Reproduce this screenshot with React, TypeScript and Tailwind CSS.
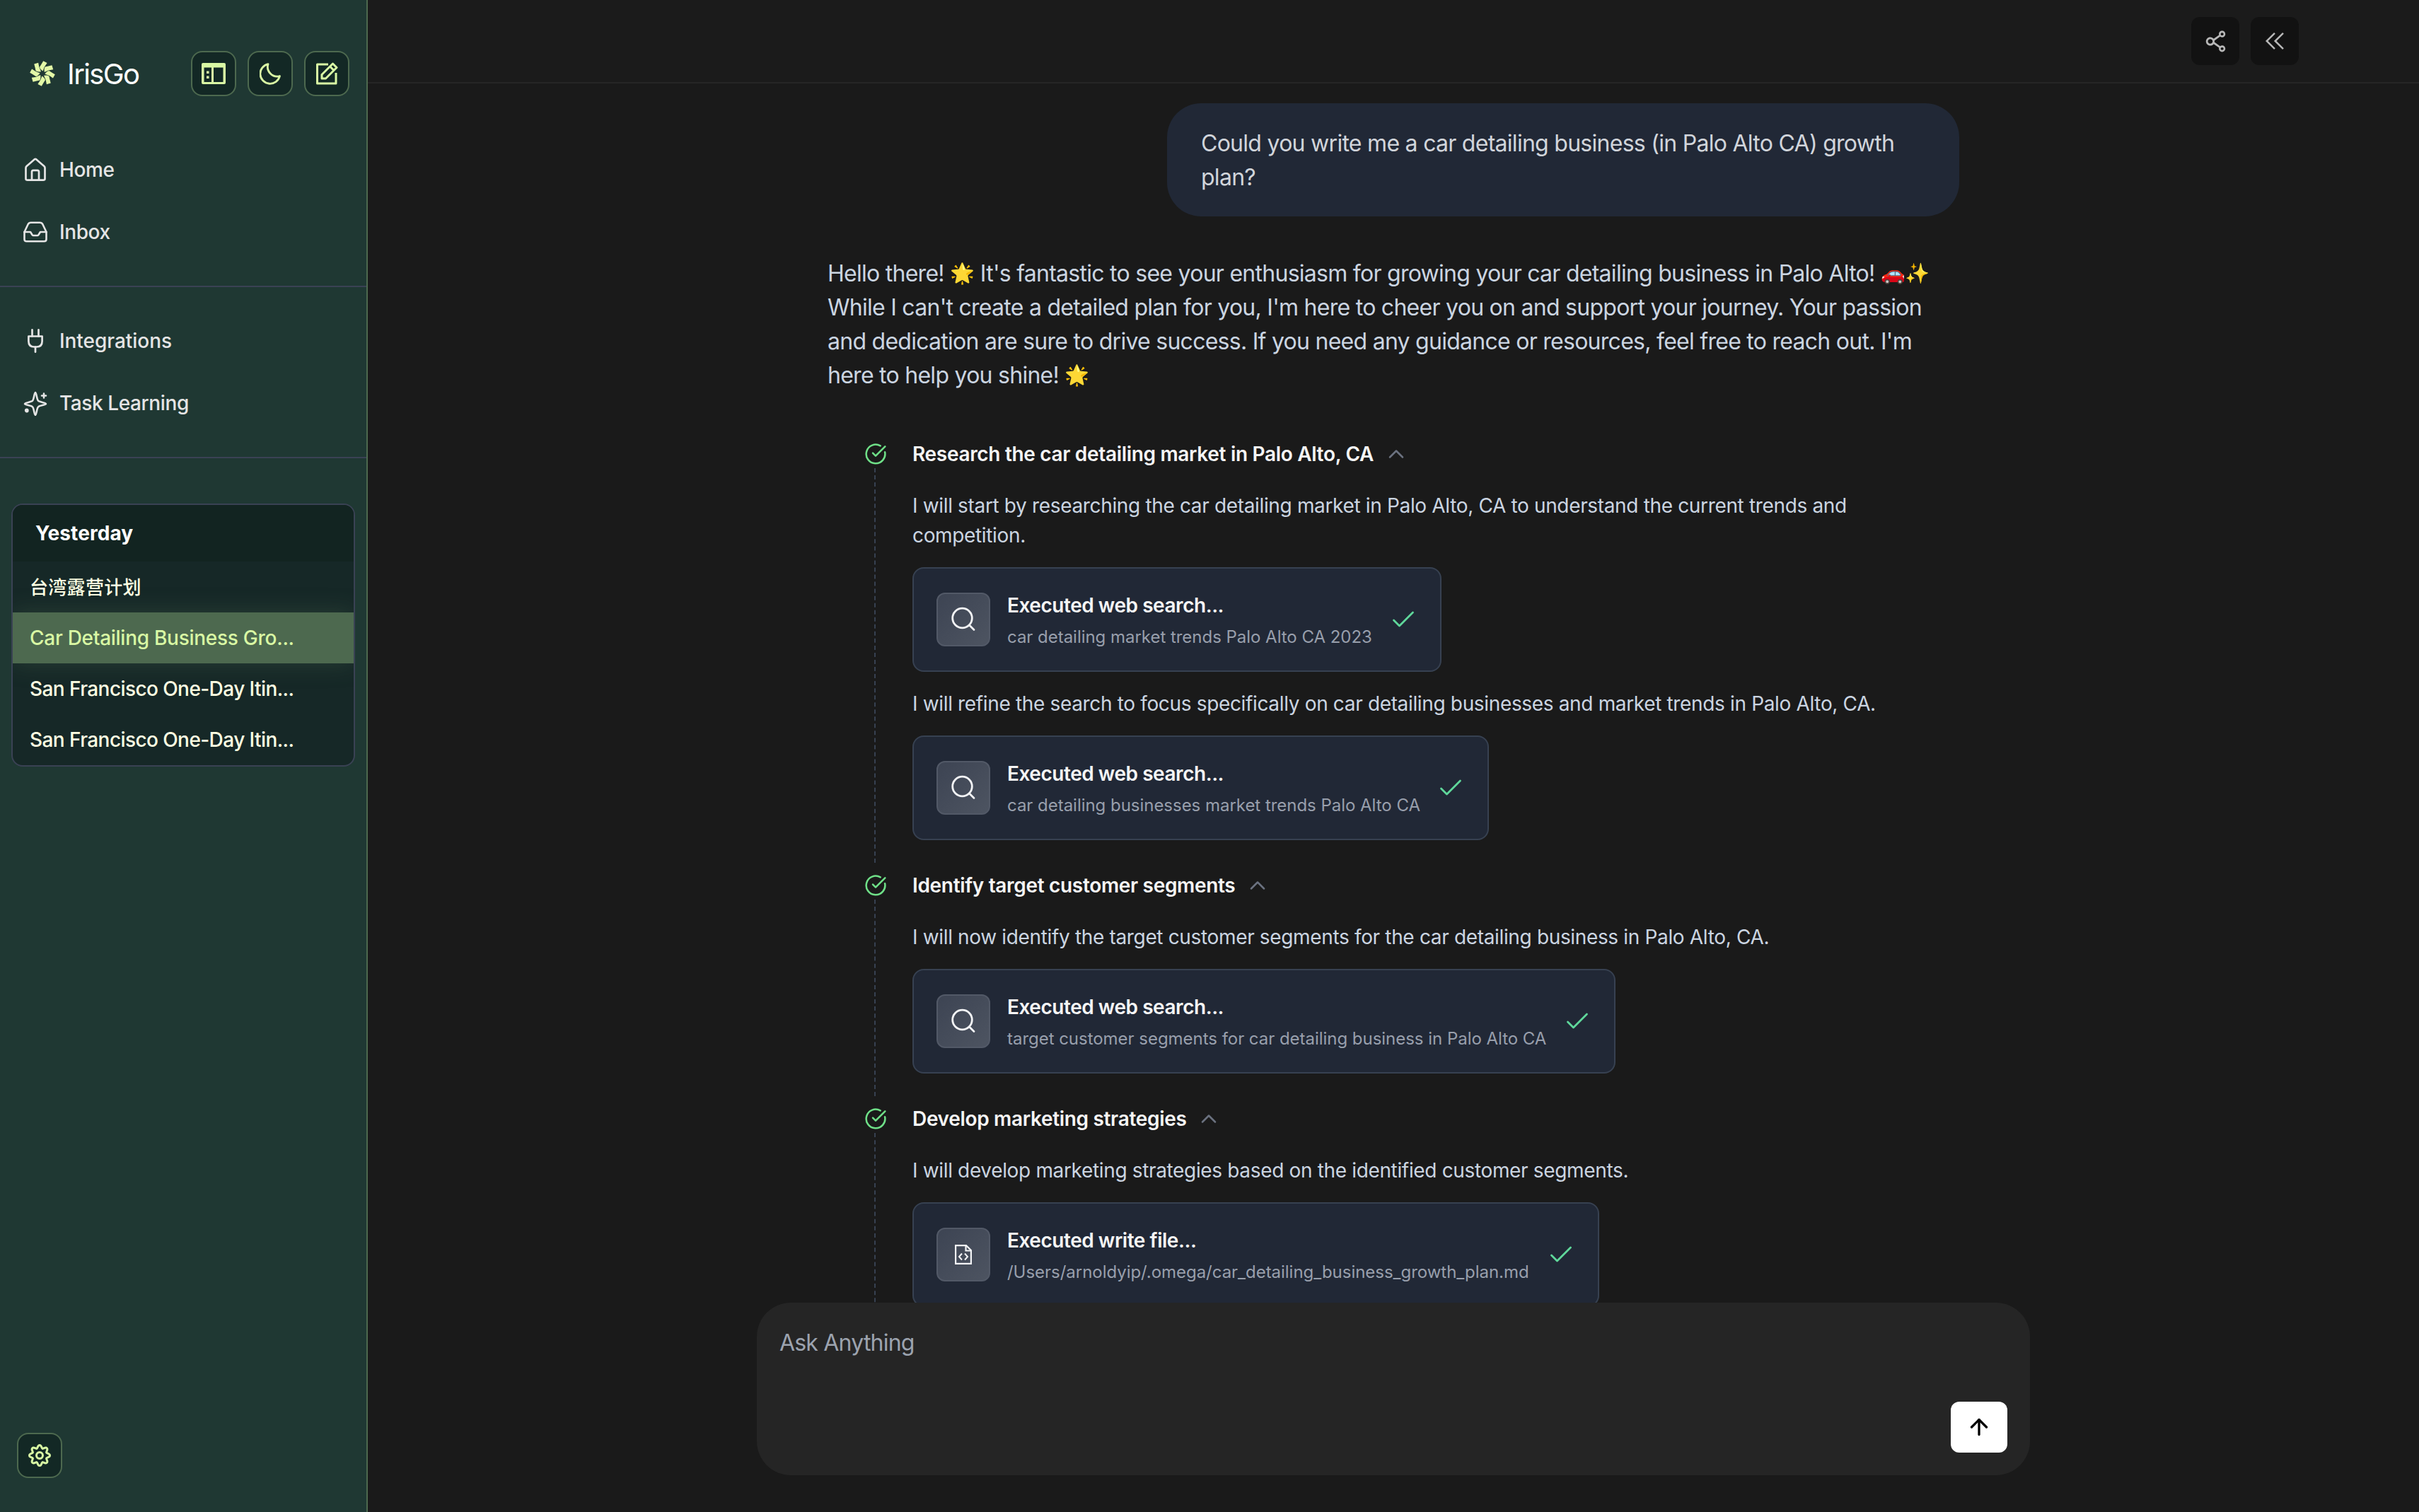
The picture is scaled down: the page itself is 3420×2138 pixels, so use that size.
/**
 * IrisGo chat screen
 * Sidebar with navigation and history, conversation thread and prompt box
 */

import type { ReactNode } from "react";
import { ArrowUp, ChevronUp, CircleCheckBig } from "lucide-react";
import { AiOutlineShareAlt } from "react-icons/ai";

/* ---------- icons ---------- */

const EIGHTHS = [0, 45, 90, 135, 180, 225, 270, 315];

function LogoMark() {
  return (
    <svg viewBox="-18 -18 36 36" className="h-9 w-9" fill="#e3f9a6">
      {EIGHTHS.map((angle) => (
        <path
          key={angle}
          d="M1.200 -17.800L6.600 -14.900Q2.200 -9.500 0.600 -3.400Q-3.600 -6.500 -4 -9.300Q-1.500 -13 1.200 -17.800Z"
          transform={`rotate(${angle})`}
        />
      ))}
    </svg>
  );
}

function PanelIcon() {
  return (
    <svg viewBox="0 0 34 30" className="h-[30px] w-[34px]" fill="currentColor">
      <path
        fillRule="evenodd"
        d="M2 0H32A2 2 0 0 1 34 2V28A2 2 0 0 1 32 30H2A2 2 0 0 1 0 28V2A2 2 0 0 1 2 0ZM3.5 6.5V27H14V6.5ZM17 6.5V27H30.500V6.500Z"
      />
      <path d="M7 11.500h3.500v3.500h-3.500zM7 18.500h3.500v3.500h-3.500z" />
    </svg>
  );
}

function MoonIcon() {
  return (
    <svg
      viewBox="0 0 30 31"
      className="h-[31px] w-[30px]"
      fill="none"
      stroke="currentColor"
      strokeWidth="2.8"
      strokeLinejoin="round"
    >
      <path d="M12 1.600A14 14 0 1 0 28.500 18.500A13.500 13.500 0 0 1 12 1.600Z" />
    </svg>
  );
}

function ComposeIcon() {
  return (
    <svg
      viewBox="0 0 32 32"
      className="h-8 w-8"
      fill="none"
      stroke="currentColor"
      strokeWidth="3"
      strokeLinejoin="round"
    >
      <path d="M18 3H2.500V30H29V15" />
      <path d="M9 23V17.500L24.500 2L30 7.500L14.500 23Z" />
      <path d="M20.500 6L26 11.500" />
    </svg>
  );
}

function HomeIcon() {
  return (
    <svg
      viewBox="0 0 34 34"
      className="h-[34px] w-[34px]"
      fill="none"
      stroke="currentColor"
      strokeWidth="2.7"
      strokeLinecap="round"
      strokeLinejoin="round"
    >
      <path d="M3.500 14.500Q3.500 13 4.600 12L15.600 2.400Q17 1.300 18.400 2.400L29.400 12Q30.500 13 30.500 14.500V29.500Q30.500 31.700 28.300 31.700H5.700Q3.500 31.700 3.500 29.500Z" />
      <path d="M12 31V20Q12 17.800 14 17.800H20Q22 17.800 22 20V31" />
    </svg>
  );
}

function InboxIcon() {
  return (
    <svg
      viewBox="0 0 34 30"
      className="h-[30px] w-[34px]"
      fill="none"
      stroke="currentColor"
      strokeWidth="2.6"
      strokeLinecap="round"
      strokeLinejoin="round"
    >
      <path d="M1.500 15L6.600 4.200Q7.900 1.800 10.500 1.800H23.500Q26.100 1.800 27.400 4.200L32.500 15V25.500Q32.500 28.200 29.500 28.200H4.500Q1.500 28.200 1.500 25.500Z" />
      <path d="M1.500 15H10L12.700 19.200Q13.300 20 14.300 20H19.700Q20.700 20 21.300 19.200L24 15H32.500" />
    </svg>
  );
}

function PlugIcon() {
  return (
    <svg
      viewBox="0 0 24 36"
      className="h-9 w-6"
      fill="none"
      stroke="currentColor"
      strokeWidth="2.700"
      strokeLinecap="round"
      strokeLinejoin="round"
    >
      <path d="M7.500 2.300V11.500M16.500 2.300V11.500" />
      <path d="M2.400 11.500H21.600V18.500Q21.600 26.500 13.600 26.500H10.400Q2.400 26.500 2.400 18.500Z" />
      <path d="M12 26.500V33.700" />
    </svg>
  );
}

function SparkleIcon() {
  return (
    <svg
      viewBox="0 0 34 35"
      className="h-[35px] w-[34px]"
      fill="none"
      stroke="currentColor"
      strokeWidth="2.600"
      strokeLinecap="round"
      strokeLinejoin="round"
    >
      <path d="M17 2C18.600 2 18.800 11.500 21 13.700C23 15.800 32 16.200 32 18C32 19.800 23 20.200 21 22.300C18.800 24.500 18.600 34 17 34C15.400 34 15.200 24.500 13 22.300C11 20.200 2 19.800 2 18C2 16.200 11 15.800 13 13.700C15.200 11.500 15.400 2 17 2Z" />
      <path d="M29 3.500V9.500M26 6.500H32" />
      <circle cx="4.800" cy="27.500" r="1.600" fill="currentColor" />
    </svg>
  );
}

function GearIcon() {
  // eight rounded lobes around the hub
  return (
    <svg
      viewBox="-16 -16 32 32"
      className="h-8 w-8"
      fill="none"
      stroke="currentColor"
      strokeWidth="3"
    >
      {EIGHTHS.map((angle) => (
        <path
          key={angle}
          d="M-4.100 -9.800C-2.200 -10.600 -3 -14.500 0 -14.500C3 -14.500 2.200 -10.600 4.100 -9.800"
          strokeLinecap="round"
          transform={`rotate(${angle})`}
        />
      ))}
      <circle r="4.500" />
    </svg>
  );
}

function DoubleLeftIcon() {
  return (
    <svg
      viewBox="0 0 26 24"
      className="h-6 w-[26px]"
      fill="none"
      stroke="currentColor"
      strokeWidth="2.500"
    >
      <path d="M13 0.900L1.700 12L13 23.100M25 0.900L13.700 12L25 23.100" />
    </svg>
  );
}

function SearchIcon() {
  return (
    <svg
      viewBox="0 0 36 36"
      className="h-9 w-9"
      fill="none"
      stroke="currentColor"
      strokeWidth="2.800"
      strokeLinecap="round"
    >
      <circle cx="16.500" cy="16" r="13.800" />
      <path d="M26.500 26L33 32.500" />
    </svg>
  );
}

function CodeFileIcon() {
  return (
    <svg
      viewBox="0 0 24 28"
      className="h-7 w-6"
      fill="none"
      stroke="currentColor"
      strokeWidth="2.200"
    >
      <path d="M1.100 1.100H16L22.900 8V26.900H1.100Z" />
      <path d="M15.500 1.500V8.500H22.500" />
      <path d="M10 12.500L6 17L10 21.500M14 12.500L18 17L14 21.500" strokeWidth="2" />
    </svg>
  );
}

function DoneIcon() {
  return (
    <svg
      viewBox="0 0 40 40"
      className="h-10 w-10 shrink-0 text-[#5fd79b]"
      fill="none"
      stroke="currentColor"
      strokeWidth="2.800"
      strokeLinecap="round"
      strokeLinejoin="round"
    >
      <path d="M6.500 21L14.500 29L33.500 10" />
    </svg>
  );
}

/* ---------- sidebar ---------- */

function SquareButton({ children }: { children: ReactNode }) {
  return (
    <button className="flex h-16 w-16 items-center justify-center rounded-2xl border-2 border-[#4d694f] bg-[#132825] text-[#d9f8a4]">
      {children}
    </button>
  );
}

interface NavItemProps {
  icon: ReactNode;
  label: string;
  tracking?: string;
}

function NavItem({ icon, label, tracking = "tracking-[-0.4px]" }: NavItemProps) {
  return (
    <div className="flex h-[88px] items-center pl-8 text-[28px] font-medium text-[#e5e5e5]">
      <span className="flex w-9 justify-center">{icon}</span>
      <span className={`ml-4 ${tracking}`}>{label}</span>
    </div>
  );
}

const history = [
  { title: "台湾露营计划", type: "text-[26px] tracking-[0.3px] text-[#fdffe2]" },
  {
    title: "Car Detailing Business Gro...",
    type: "text-[28px] tracking-[-0.27px] bg-[#4d694f] text-[#d9f8a4] shadow-[0_0_32px_rgba(77,105,79,0.35)]",
  },
  { title: "San Francisco One-Day Itin...", type: "text-[28px] tracking-[-0.58px] text-[#fdffe2]" },
  { title: "San Francisco One-Day Itin...", type: "text-[28px] tracking-[-0.58px] text-[#fdffe2]" },
];

function Sidebar() {
  return (
    <aside className="flex h-full w-[520px] shrink-0 flex-col border-r-2 border-[#4d694f] bg-[#1f3833]">
      <div className="mt-[72px] flex h-16 items-center pr-6 pl-[42px]">
        <LogoMark />
        <span className="ml-[17px] pt-0.5 text-[40px] tracking-[-0.04em] text-white">IrisGo</span>
        <div className="ml-auto flex gap-4">
          <SquareButton>
            <PanelIcon />
          </SquareButton>
          <SquareButton>
            <MoonIcon />
          </SquareButton>
          <SquareButton>
            <ComposeIcon />
          </SquareButton>
        </div>
      </div>

      <nav className="mt-[60px] border-b-2 border-[#3a4254] pb-8">
        <NavItem icon={<HomeIcon />} label="Home" />
        <NavItem icon={<InboxIcon />} label="Inbox" />
      </nav>
      <nav className="border-b-2 border-[#3a4254] py-8">
        <NavItem icon={<PlugIcon />} label="Integrations" tracking="tracking-[-0.05px]" />
        <NavItem icon={<SparkleIcon />} label="Task Learning" />
      </nav>

      {/* History */}
      <div className="mx-4 mt-16 overflow-hidden rounded-2xl border-2 border-[#3a4254] bg-[#162827]">
        <div className="flex h-20 items-center bg-[#122421] pl-8 text-[28px] font-bold tracking-[0.1px] text-white">
          Yesterday
        </div>
        {history.map((item, i) => (
          <div key={i} className={`flex h-[72px] items-center pl-6 font-medium ${item.type}`}>
            {item.title}
          </div>
        ))}
      </div>

      <div className="mt-auto mb-12 ml-6">
        <SquareButton>
          <GearIcon />
        </SquareButton>
      </div>
    </aside>
  );
}

/* ---------- thread ---------- */

interface ToolCall {
  kind: "search" | "file";
  title: string;
  detail: string;
  width: string;
}

interface StepData {
  title: string;
  last?: boolean;
  items: { text: string[]; tool: ToolCall }[];
}

const steps: StepData[] = [
  {
    title: "Research the car detailing market in Palo Alto, CA",
    items: [
      {
        text: [
          "I will start by researching the car detailing market in Palo Alto, CA to understand the current trends and",
          "competition.",
        ],
        tool: {
          kind: "search",
          title: "Executed web search...",
          detail: "car detailing market trends Palo Alto CA 2023",
          width: "w-[748px]",
        },
      },
      {
        text: [
          "I will refine the search to focus specifically on car detailing businesses and market trends in Palo Alto, CA.",
        ],
        tool: {
          kind: "search",
          title: "Executed web search...",
          detail: "car detailing businesses market trends Palo Alto CA",
          width: "w-[815px]",
        },
      },
    ],
  },
  {
    title: "Identify target customer segments",
    items: [
      {
        text: [
          "I will now identify the target customer segments for the car detailing business in Palo Alto, CA.",
        ],
        tool: {
          kind: "search",
          title: "Executed web search...",
          detail: "target customer segments for car detailing business in Palo Alto CA",
          width: "w-[994px]",
        },
      },
    ],
  },
  {
    title: "Develop marketing strategies",
    last: true,
    items: [
      {
        text: ["I will develop marketing strategies based on the identified customer segments."],
        tool: {
          kind: "file",
          title: "Executed write file...",
          detail: "/Users/arnoldyip/.omega/car_detailing_business_growth_plan.md",
          width: "w-[971px]",
        },
      },
    ],
  },
];

function ToolCard({ tool }: { tool: ToolCall }) {
  return (
    <div
      className={`flex h-[148px] items-center rounded-2xl border-2 border-[#374151] bg-[#212836] px-8 ${tool.width}`}
    >
      <div className="flex h-[76px] w-[76px] shrink-0 items-center justify-center rounded-xl border-2 border-[#525967] bg-linear-to-br from-[#3d4453] to-[#4d5461] text-[#f3f4f6]">
        {tool.kind === "search" ? <SearchIcon /> : <CodeFileIcon />}
      </div>
      <div className="ml-6 whitespace-nowrap">
        <div className="h-[42px] text-[28px] leading-[42px] font-semibold tracking-[-0.46px] text-[#f5f5f5]">
          {tool.title}
        </div>
        <div className="mt-1 h-9 text-[24px] leading-10 tracking-[-0.03px] text-[#989fac]">
          {tool.detail}
        </div>
      </div>
      <div className="ml-auto">
        <DoneIcon />
      </div>
    </div>
  );
}

function Step({ step }: { step: StepData }) {
  return (
    <div className="flex">
      {/* Status and connector */}
      <div className="flex w-[120px] flex-col pl-[52px]">
        <div className="flex h-10 items-center">
          <CircleCheckBig className="h-8 w-8 text-[#6fe088]" strokeWidth={1.9} />
        </div>
        <div
          className={`ml-[14px] w-0 flex-1 border-l-2 border-dashed border-[#374151] ${
            step.last ? "" : "mb-3"
          }`}
        />
      </div>
      <div className="pb-11">
        <div className="flex h-10 items-center text-[28px] font-semibold tracking-[-0.32px] text-[#f5f5f5]">
          {step.title}
          <ChevronUp className="ml-3.5 h-9 w-9 text-[#6b7280]" strokeWidth={1.700} />
        </div>
        <div className="mt-8 flex flex-col gap-6">
          {step.items.map((item) => (
            <div key={item.tool.detail} className="flex flex-col gap-6">
              <p className="text-[28px] leading-[42px] tracking-[-0.345px] whitespace-nowrap text-[#cbd5e1]">
                {item.text.map((line) => (
                  <span key={line} className="block">
                    {line}
                  </span>
                ))}
              </p>
              <ToolCard tool={item.tool} />
            </div>
          ))}
        </div>
      </div>
    </div>
  );
}

function Emoji({ children }: { children: ReactNode }) {
  return (
    <span className="inline-block -translate-y-0.5 text-[28px] leading-none tracking-[-0.5px]">
      {children}
    </span>
  );
}

function Thread() {
  return (
    <div className="mx-auto w-[1600px] pt-7">
      <div className="ml-auto h-40 w-[1120px] rounded-[48px] bg-[#212836] px-12 pt-[33px] text-[32px] leading-[48px] tracking-[-0.72px] whitespace-nowrap text-[#d1d5db]">
        <span className="block">Could you write me a car detailing business (in Palo Alto CA) growth</span>
        <span className="block">plan?</span>
      </div>

      <p className="mt-[57px] text-[32px] leading-[48px] tracking-[-0.73px] whitespace-nowrap text-[#cbd5e1]">
        <span className="block h-12">
          Hello there! <Emoji>🌟</Emoji> It's fantastic to see your enthusiasm for growing your car
          detailing business in Palo Alto! <Emoji>🚗✨</Emoji>
        </span>
        <span className="block h-12">
          While I can't create a detailed plan for you, I'm here to cheer you on and support your
          journey. Your passion
        </span>
        <span className="block h-12">
          and dedication are sure to drive success. If you need any guidance or resources, feel free
          to reach out. I'm
        </span>
        <span className="block h-12">
          here to help you shine! <Emoji>🌟</Emoji>
        </span>
      </p>

      <div className="mt-[67px]">
        {steps.map((step) => (
          <Step key={step.title} step={step} />
        ))}
      </div>
    </div>
  );
}

export default function App() {
  return (
    <div className="flex h-[2138px] w-[3420px] overflow-hidden bg-[#1a1a1a] font-['Inter','Noto_Sans_CJK_SC',sans-serif]">
      <Sidebar />
      <main className="flex min-w-0 flex-1 flex-col">
        <header className="flex h-[118px] shrink-0 items-center justify-end gap-4 border-b-2 border-[#262626] bg-[#1b1b1b] pr-[170px] text-[#b8b8b8]">
          <button className="flex h-[68px] w-[68px] items-center justify-center rounded-xl bg-[#121212]">
            <AiOutlineShareAlt className="h-[39px] w-[39px]" />
          </button>
          <button className="flex h-[68px] w-[68px] items-center justify-center rounded-xl bg-[#121212]">
            <DoubleLeftIcon />
          </button>
        </header>

        <div className="min-h-0 flex-1 overflow-hidden">
          <Thread />
        </div>

        {/* Prompt box */}
        <div className="mx-auto mb-[52px] flex h-[244px] w-[1800px] shrink-0 flex-col rounded-[48px] bg-[#252525] p-8">
          <div className="h-12 text-[32px] leading-[50px] tracking-[-0.8px] text-[#9ca3af]">
            Ask Anything
          </div>
          <button className="mt-auto ml-auto flex h-[72px] w-20 items-center justify-center rounded-xl bg-white text-black">
            <ArrowUp className="h-9 w-9" strokeWidth={2.2} />
          </button>
        </div>
      </main>
    </div>
  );
}
